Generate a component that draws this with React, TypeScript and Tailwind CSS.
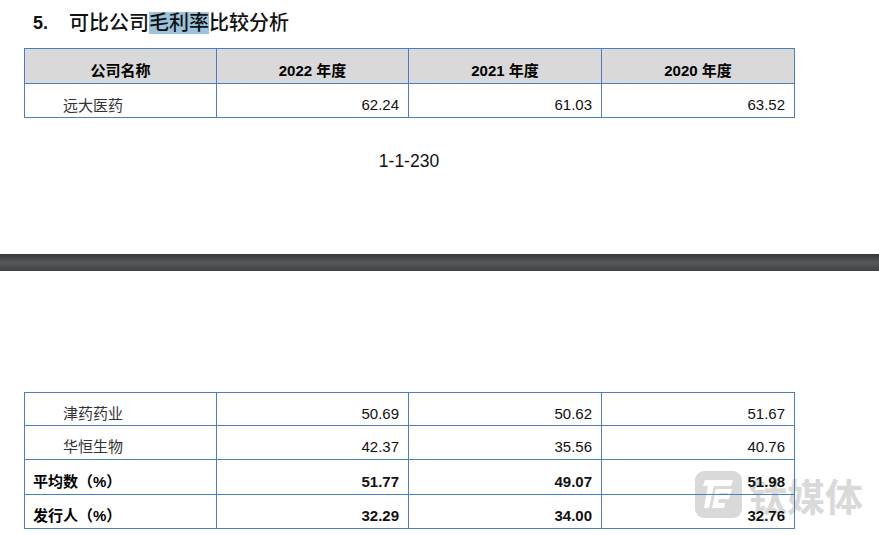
import React from 'react';

const cjk = "font-['Liberation_Sans','Noto_Sans_CJK_SC',sans-serif]";
const cell = 'border border-[#4a7ebd] text-[15px] leading-[20px] text-[#111] pt-[9px] pr-[9px] text-right align-middle';

interface RowProps {
    name: string;
    values: string[];
    bold?: boolean;
    height: string;
    namePad?: string;
}

const Row: React.FC<RowProps> = ({ name, values, bold, height, namePad = 'pt-[9px]' }) => (
    <tr className={`${height} ${bold ? 'font-bold' : ''}`}>
        <td className={`border border-[#4a7ebd] text-[15px] leading-[20px] text-left align-middle ${namePad} ${bold ? 'pl-[8px] text-black' : 'pl-[38px] text-[#333]'}`}>
            {name}
        </td>
        {values.map((v, i) => (
            <td key={i} className={cell}>{v}</td>
        ))}
    </tr>
);

const Cols = () => (
    <colgroup>
        <col className="w-[192px]" />
        <col className="w-[192px]" />
        <col className="w-[193px]" />
        <col className="w-[193px]" />
    </colgroup>
);

const Watermark = () => (
    <div className="absolute left-[695px] top-[471px] flex items-center gap-[7px]">
        <svg width="47" height="47" viewBox="0 0 47 47">
            <rect width="47" height="47" rx="9" fill="#d9d9d9" />
            {/* slanted T */}
            <path d="M10 9H38L36 15H19L14 37H9L13 15H8Z" fill="#fff" />
            {/* inner E */}
            <path d="M21 18H37L34 28H24L23 32H30L29 37H17Z" fill="#fff" />
            <path d="M24 23H33" stroke="#d9d9d9" strokeWidth="2" />
        </svg>
        <span className="text-[38px] leading-[47px] font-bold text-[#d9d9d9] font-['Noto_Sans_CJK_SC',sans-serif]">钛媒体</span>
    </div>
);

export default function App() {
    return (
        <div className={`relative w-[879px] h-[535px] overflow-hidden bg-white ${cjk}`}>
            <Watermark />

            <div className="relative h-[254px]">
                <h1 className="pl-[33px] pt-[11px] flex items-center h-[36px] text-[20px] leading-[19px] font-medium text-[#111]">
                    <span className="w-[36px] font-bold text-[18px]">5.</span>
                    <span>
                        可比公司<span className="bg-[#9cc3dc]">毛利率</span>比较分析
                    </span>
                </h1>

                <table className="relative ml-[24px] mt-[12px] w-[770px] table-fixed border-collapse">
                    <Cols />
                    <thead>
                        <tr className="h-[35px] bg-[#d9d9d9] font-bold text-[15px] leading-[20px] text-black">
                            <th className="border border-[#4a7ebd] pt-[9px]">公司名称</th>
                            <th className="border border-[#4a7ebd] pt-[9px]">2022 年度</th>
                            <th className="border border-[#4a7ebd] pt-[9px]">2021 年度</th>
                            <th className="border border-[#4a7ebd] pt-[9px]">2020 年度</th>
                        </tr>
                    </thead>
                    <tbody>
                        <Row name="远大医药" values={['62.24', '61.03', '63.52']} height="h-[34px]" namePad="pt-[10px]" />
                    </tbody>
                </table>

                <p className="mt-[32px] pr-[61px] text-center text-[17.5px] leading-[22px] text-[#111]">1-1-230</p>
            </div>

            <div className="h-[17px] bg-gradient-to-b from-[#33373a] via-[#54585a] to-[#3f4346]" />

            <table className="relative ml-[24px] mt-[121px] w-[770px] table-fixed border-collapse">
                <Cols />
                <tbody>
                    <Row name="津药药业" values={['50.69', '50.62', '51.67']} height="h-[33px]" />
                    <Row name="华恒生物" values={['42.37', '35.56', '40.76']} height="h-[34px]" />
                    <Row name="平均数（%）" values={['51.77', '49.07', '51.98']} bold height="h-[35px]" />
                    <Row name="发行人（%）" values={['32.29', '34.00', '32.76']} bold height="h-[34px]" />
                </tbody>
            </table>
        </div>
    );
}
